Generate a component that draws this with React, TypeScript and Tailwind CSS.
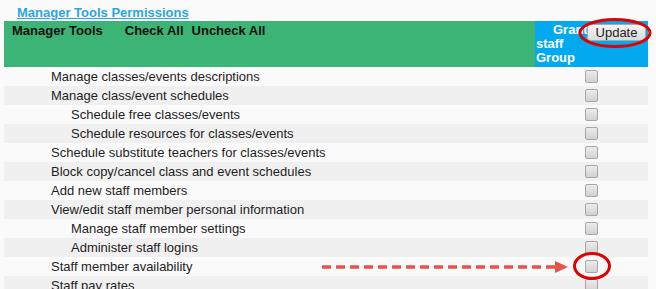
import React from 'react';

// ── Data ──────────────────────────────────────────────────────────────────────
const permissions: { label: string; level: 1 | 2 }[] = [
  { label: 'Manage classes/events descriptions', level: 1 },
  { label: 'Manage class/event schedules', level: 1 },
  { label: 'Schedule free classes/events', level: 2 },
  { label: 'Schedule resources for classes/events', level: 2 },
  { label: 'Schedule substitute teachers for classes/events', level: 1 },
  { label: 'Block copy/cancel class and event schedules', level: 1 },
  { label: 'Add new staff members', level: 1 },
  { label: 'View/edit staff member personal information', level: 1 },
  { label: 'Manage staff member settings', level: 2 },
  { label: 'Administer staff logins', level: 2 },
  { label: 'Staff member availability', level: 1 },
  { label: 'Staff pay rates', level: 1 },
];

function Checkbox() {
  return (
    <span className="block w-[13px] h-[13px] rounded-[2px] border border-[#a6a6a6] bg-gradient-to-b from-[#ececec] to-[#d2d2d2]" />
  );
}

export default function App() {
  return (
    <div className="relative w-[656px] h-[289px] overflow-hidden bg-[#fafafa] font-['Liberation_Sans',Arial,sans-serif] text-[13px] text-[#1e1e1e]">
      <div className="pl-[4px] w-[648px]">
        {/* Title */}
        <div className="h-[21px] pl-[13px] pt-[5px] leading-[15px]">
          <a href="#" className="font-bold text-[#2ba6e1] underline">
            Manager Tools Permissions
          </a>
        </div>

        {/* Header */}
        <div className="flex h-[46px]">
          <div className="flex-1 bg-[#3bb475] pl-[8px] pt-[2px] font-bold text-[#111] leading-[15px] flex">
            <span>Manager Tools</span>
            <span className="ml-[22px]">Check All</span>
            <span className="ml-[8px]">Uncheck All</span>
          </div>
          <div className="relative w-[113px] bg-[#03a9ee] pt-[2px] pl-[1px] font-bold text-white leading-[14px]">
            <div className="pl-[17px]">Grant</div>
            <div>staff</div>
            <div>Group</div>
            <button className="absolute left-[52px] top-[3px] w-[59px] h-[17px] rounded-[3px] border border-[#a9a9a9] bg-gradient-to-b from-[#f6f6f6] to-[#dadada] text-[13px] font-normal text-[#222] leading-[15px]">
              Update
            </button>
          </div>
        </div>

        {/* Rows */}
        {permissions.map((p, i) => (
          <div
            key={p.label}
            className={`flex h-[19px] items-center ${i % 2 === 1 ? 'bg-[#f0f0f0]' : 'bg-[#fafafa]'}`}
          >
            <div className={`flex-1 leading-[15px] ${p.level === 2 ? 'pl-[67px]' : 'pl-[47px]'}`}>
              {p.label}
            </div>
            <div className="w-[113px] flex justify-center">
              <Checkbox />
            </div>
          </div>
        ))}
      </div>

      {/* Annotations */}
      <svg className="absolute inset-0 pointer-events-none" width="656" height="289">
        <ellipse cx="615" cy="33" rx="35" ry="13.5" fill="none" stroke="#e00000" strokeWidth="3" />
        <ellipse cx="592" cy="266" rx="17.5" ry="12.5" fill="none" stroke="#e00000" strokeWidth="3" />
        <line x1="322" y1="267" x2="556" y2="267" stroke="#e5534b" strokeWidth="3.5" strokeDasharray="9 5" />
        <polygon points="555,261 568,267 555,273" fill="#e5534b" />
      </svg>
    </div>
  );
}
